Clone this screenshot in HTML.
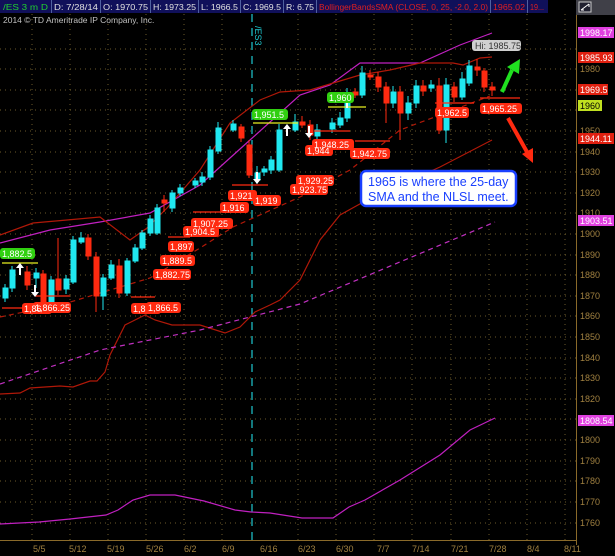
<!DOCTYPE html>
<html><head><meta charset="utf-8"><style>
html,body{margin:0;padding:0;background:#000;width:615px;height:556px;overflow:hidden}
svg{display:block;font-family:"Liberation Sans",sans-serif}
</style></head><body>
<svg width="615" height="556" viewBox="0 0 615 556">
<rect width="615" height="556" fill="#000"/>
<g stroke="#6b5a2a" stroke-width="1" stroke-dasharray="1,4">
<path d="M32 14V540M70 14V540M108 14V540M146 14V540M184 14V540M222 14V540M298 14V540M336 14V540M374 14V540M412 14V540M451 14V540M489 14V540M527 14V540M565 14V540"/>
<path d="M0 49H576M0 69H576M0 90H576M0 110H576M0 131H576M0 152H576M0 172H576M0 193H576M0 213H576M0 234H576M0 255H576M0 275H576M0 296H576M0 316H576M0 337H576M0 358H576M0 378H576M0 399H576M0 419H576M0 440H576M0 461H576M0 481H576M0 502H576M0 523H576"/>
</g>
<line x1="252" y1="14" x2="252" y2="540" stroke="#1ec8d0" stroke-width="1.2" stroke-dasharray="8,6"/>
<text x="0" y="0" fill="#1ec8d0" font-size="9" transform="translate(255,26) rotate(90)">/ES3</text>
<line x1="576.5" y1="14" x2="576.5" y2="545" stroke="#8a6a2a"/>
<line x1="0" y1="540.5" x2="576" y2="540.5" stroke="#8a6a2a"/>
<g fill="#a08040" font-size="9">
<text x="580" y="72">1980</text><text x="580" y="134">1950</text><text x="580" y="155">1940</text><text x="580" y="175">1930</text><text x="580" y="196">1920</text><text x="580" y="216">1910</text><text x="580" y="237">1900</text><text x="580" y="258">1890</text><text x="580" y="278">1880</text><text x="580" y="299">1870</text><text x="580" y="319">1860</text><text x="580" y="340">1850</text><text x="580" y="361">1840</text><text x="580" y="381">1830</text><text x="580" y="402">1820</text><text x="580" y="443">1800</text><text x="580" y="464">1790</text><text x="580" y="484">1780</text><text x="580" y="505">1770</text><text x="580" y="526">1760</text>
</g>
<g fill="#a08040" font-size="9">
<text x="33" y="552">5/5</text><text x="69" y="552">5/12</text><text x="107" y="552">5/19</text><text x="146" y="552">5/26</text><text x="184" y="552">6/2</text><text x="222" y="552">6/9</text><text x="260" y="552">6/16</text><text x="298" y="552">6/23</text><text x="336" y="552">6/30</text><text x="377" y="552">7/7</text><text x="412" y="552">7/14</text><text x="451" y="552">7/21</text><text x="489" y="552">7/28</text><text x="527" y="552">8/4</text><text x="564" y="552">8/11</text>
</g>
<g font-size="9">
<rect x="578" y="27" width="36" height="11" fill="#e040e0"/><text x="580" y="36" fill="#fff">1998.17</text>
<rect x="578" y="52" width="36" height="11" fill="#e02010"/><text x="580" y="61" fill="#fff">1985.93</text>
<rect x="578" y="84" width="30" height="11" fill="#e02010"/><text x="580" y="93" fill="#fff">1969.5</text>
<rect x="578" y="100" width="24" height="11" fill="#c0e020"/><text x="580" y="109" fill="#000">1960</text>
<rect x="578" y="133" width="36" height="11" fill="#e02010"/><text x="580" y="142" fill="#fff">1944.11</text>
<rect x="578" y="215" width="36" height="11" fill="#e040e0"/><text x="580" y="224" fill="#fff">1903.51</text>
<rect x="578" y="415" width="36" height="11" fill="#e040e0"/><text x="580" y="424" fill="#fff">1808.54</text>
</g>
<g fill="none" stroke-width="1.2">
<polyline stroke="#c020c0" points="0,243 50,230 100,222 150,213 200,185 250,140 300,95 330,85 360,63 420,63 460,45 492,33"/>
<polyline stroke="#b01808" points="0,235 33,223 67,220 100,217 130,240 147,228 167,208 200,170 230,123 260,100 280,92 310,90 360,75 390,70 420,63 453,63 463,65 480,58 492,57"/>
<polyline stroke="#b01808" points="0,394 20,393 30,388 60,386 73,387 90,381 97,381 105,372 110,355 125,325 145,315 155,320 172,325 200,325 225,333 240,327 255,312 270,305 280,300 300,280 320,240 340,215 367,200 400,185 440,167 492,140"/>
<polyline stroke="#b01808" stroke-dasharray="5,4" points="0,317 67,303 150,278 200,248 233,227 300,197 350,170 400,130 440,115 490,96"/>
<polyline stroke="#c030c0" stroke-dasharray="5,4" points="0,384 100,350 200,330 300,304 495,222"/>
<polyline stroke="#c020c0" points="0,524 39,522 70,519 106,515 118,510 133,500 150,495 175,495 204,501 235,510 251,512 270,513 302,518 333,518 349,507 365,500 400,480 440,455 470,430 495,418"/>
</g>
<g stroke-width="1">
<g stroke="#20e8f0" fill="#20e8f0">
<line x1="5" y1="284" x2="5" y2="302"/><rect x="3" y="288" width="5" height="10"/>
<line x1="12" y1="266" x2="12" y2="292"/><rect x="10" y="270" width="5" height="18"/>
<line x1="36" y1="268" x2="36" y2="288"/><rect x="34" y="273" width="5" height="5"/>
<line x1="51" y1="276" x2="51" y2="312"/><rect x="49" y="280" width="5" height="23"/>
<line x1="66" y1="275" x2="66" y2="294"/><rect x="64" y="279" width="5" height="10"/>
<line x1="73" y1="236" x2="73" y2="284"/><rect x="71" y="240" width="5" height="42"/>
<line x1="81" y1="232" x2="81" y2="244"/><rect x="79" y="238" width="5" height="4"/>
<line x1="103" y1="274" x2="103" y2="310"/><rect x="101" y="278" width="5" height="18"/>
<line x1="111" y1="260" x2="111" y2="280"/><rect x="109" y="265" width="5" height="13"/>
<line x1="127" y1="258" x2="127" y2="296"/><rect x="125" y="261" width="5" height="32"/>
<line x1="135" y1="244" x2="135" y2="263"/><rect x="133" y="248" width="5" height="13"/>
<line x1="142" y1="230" x2="142" y2="250"/><rect x="140" y="233" width="5" height="15"/>
<line x1="150" y1="215" x2="150" y2="236"/><rect x="148" y="219" width="5" height="14"/>
<line x1="157" y1="204" x2="157" y2="235"/><rect x="155" y="208" width="5" height="25"/>
<line x1="172" y1="190" x2="172" y2="212"/><rect x="170" y="193" width="5" height="15"/>
<line x1="180" y1="184" x2="180" y2="196"/><rect x="178" y="188" width="5" height="5"/>
<line x1="195" y1="178" x2="195" y2="188"/><rect x="193" y="181" width="5" height="4"/>
<line x1="202" y1="172" x2="202" y2="186"/><rect x="200" y="177" width="5" height="5"/>
<line x1="210" y1="146" x2="210" y2="180"/><rect x="208" y="150" width="5" height="27"/>
<line x1="218" y1="122" x2="218" y2="154"/><rect x="216" y="128" width="5" height="23"/>
<line x1="233" y1="120" x2="233" y2="132"/><rect x="231" y="124" width="5" height="6"/>
<line x1="257" y1="166" x2="257" y2="184"/><rect x="255" y="173" width="5" height="7"/>
<line x1="264" y1="166" x2="264" y2="176"/><rect x="262" y="169" width="5" height="3"/>
<line x1="271" y1="156" x2="271" y2="174"/><rect x="269" y="160" width="5" height="10"/>
<line x1="279" y1="124" x2="279" y2="172"/><rect x="277" y="130" width="5" height="40"/>
<line x1="295" y1="114" x2="295" y2="132"/><rect x="293" y="122" width="5" height="8"/>
<line x1="317" y1="124" x2="317" y2="140"/><rect x="315" y="130" width="5" height="6"/>
<line x1="332" y1="118" x2="332" y2="133"/><rect x="330" y="123" width="5" height="6"/>
<line x1="340" y1="112" x2="340" y2="128"/><rect x="338" y="118" width="5" height="7"/>
<line x1="347" y1="88" x2="347" y2="122"/><rect x="345" y="96" width="5" height="22"/>
<line x1="362" y1="66" x2="362" y2="98"/><rect x="360" y="73" width="5" height="22"/>
<line x1="393" y1="86" x2="393" y2="108"/><rect x="391" y="92" width="5" height="11"/>
<line x1="408" y1="96" x2="408" y2="120"/><rect x="406" y="103" width="5" height="10"/>
<line x1="416" y1="80" x2="416" y2="108"/><rect x="414" y="86" width="5" height="17"/>
<line x1="431" y1="80" x2="431" y2="92"/><rect x="429" y="85" width="5" height="3"/>
<line x1="446" y1="78" x2="446" y2="143"/><rect x="444" y="85" width="5" height="45"/>
<line x1="462" y1="72" x2="462" y2="100"/><rect x="460" y="79" width="5" height="18"/>
<line x1="469" y1="60" x2="469" y2="86"/><rect x="467" y="66" width="5" height="17"/>
</g>
<g stroke="#ff2a10" fill="#ff2a10">
<line x1="27" y1="266" x2="27" y2="290"/><rect x="25" y="272" width="5" height="13"/>
<line x1="43" y1="270" x2="43" y2="306"/><rect x="41" y="274" width="5" height="29"/>
<line x1="58" y1="238" x2="58" y2="295"/><rect x="56" y="279" width="5" height="11"/>
<line x1="88" y1="234" x2="88" y2="260"/><rect x="86" y="238" width="5" height="18"/>
<line x1="96" y1="252" x2="96" y2="312"/><rect x="94" y="257" width="5" height="39"/>
<line x1="119" y1="259" x2="119" y2="298"/><rect x="117" y="266" width="5" height="27"/>
<line x1="164" y1="195" x2="164" y2="212"/><rect x="162" y="200" width="5" height="3"/>
<line x1="241" y1="124" x2="241" y2="142"/><rect x="239" y="127" width="5" height="11"/>
<line x1="249" y1="140" x2="249" y2="178"/><rect x="247" y="145" width="5" height="30"/>
<line x1="302" y1="116" x2="302" y2="128"/><rect x="300" y="122" width="5" height="3"/>
<line x1="310" y1="120" x2="310" y2="140"/><rect x="308" y="125" width="5" height="10"/>
<line x1="355" y1="88" x2="355" y2="98"/><rect x="353" y="92" width="5" height="3"/>
<line x1="370" y1="70" x2="370" y2="80"/><rect x="368" y="75" width="5" height="2"/>
<line x1="378" y1="72" x2="378" y2="92"/><rect x="376" y="77" width="5" height="10"/>
<line x1="386" y1="82" x2="386" y2="123"/><rect x="384" y="87" width="5" height="16"/>
<line x1="400" y1="86" x2="400" y2="140"/><rect x="398" y="92" width="5" height="21"/>
<line x1="423" y1="80" x2="423" y2="96"/><rect x="421" y="86" width="5" height="5"/>
<line x1="439" y1="78" x2="439" y2="134"/><rect x="437" y="86" width="5" height="44"/>
<line x1="454" y1="82" x2="454" y2="102"/><rect x="452" y="87" width="5" height="10"/>
<line x1="477" y1="59" x2="477" y2="76"/><rect x="475" y="67" width="5" height="3"/>
<line x1="484" y1="68" x2="484" y2="92"/><rect x="482" y="71" width="5" height="16"/>
<line x1="492" y1="82" x2="492" y2="96"/><rect x="490" y="87" width="5" height="3"/>
</g>
</g>
<g stroke="#ff2a10" stroke-width="1.2">
<line x1="2" y1="308" x2="40" y2="308"/><line x1="35" y1="296" x2="70" y2="296"/>
<line x1="131" y1="297" x2="155" y2="297"/><line x1="168" y1="237" x2="190" y2="237"/>
<line x1="193" y1="212" x2="222" y2="212"/><line x1="232" y1="185" x2="268" y2="185"/>
<line x1="314" y1="131" x2="350" y2="131"/><line x1="355" y1="141" x2="390" y2="141"/>
<line x1="435" y1="103" x2="474" y2="103"/><line x1="480" y1="98" x2="520" y2="98"/>
</g>
<g stroke="#e8f020" stroke-width="1.3">
<line x1="2" y1="263" x2="38" y2="263"/><line x1="328" y1="107" x2="366" y2="107"/><line x1="253" y1="123" x2="298" y2="123"/>
</g>
<g fill="#fff">
<path d="M20 263l-4 5h3v7h2v-7h3z"/><path d="M35 297l-4-5h3v-7h2v7h3z"/>
<path d="M347 96l-4 5h3v7h2v-7h3z"/><path d="M309 138l-4-5h3v-7h2v7h3z"/>
<path d="M287 124l-4 5h3v7h2v-7h3z"/><path d="M257 184l-4-5h3v-7h2v7h3z"/>
</g>
<g font-size="9" fill="#fff">
<g fill="#ff2a10">
<rect x="22" y="303" width="30" height="11" rx="3"/><rect x="33" y="302" width="38" height="11" rx="3"/>
<rect x="131" y="303" width="30" height="11" rx="3"/><rect x="146" y="302" width="35" height="11" rx="3"/>
<rect x="153" y="269" width="38" height="11" rx="3"/><rect x="160" y="255" width="35" height="11" rx="3"/>
<rect x="168" y="241" width="26" height="11" rx="3"/><rect x="183" y="226" width="36" height="11" rx="3"/>
<rect x="191" y="218" width="42" height="11" rx="3"/><rect x="220" y="202" width="29" height="11" rx="3"/>
<rect x="228" y="190" width="29" height="11" rx="3"/><rect x="253" y="195" width="28" height="11" rx="3"/>
<rect x="290" y="184" width="38" height="11" rx="3"/><rect x="296" y="175" width="38" height="11" rx="3"/>
<rect x="305" y="145" width="28" height="11" rx="3"/><rect x="312" y="139" width="42" height="11" rx="3"/>
<rect x="350" y="148" width="40" height="11" rx="3"/><rect x="435" y="107" width="34" height="11" rx="3"/>
<rect x="480" y="103" width="42" height="11" rx="3"/>
</g>
<text x="24" y="312">1,86</text><text x="35" y="311">1,866.25</text>
<text x="133" y="312">1,8</text><text x="148" y="311">1,866.5</text>
<text x="155" y="278">1,882.75</text><text x="162" y="264">1,889.5</text>
<text x="170" y="250">1,897</text><text x="185" y="235">1,904.5</text>
<text x="193" y="227">1,907.25</text><text x="222" y="211">1,916</text>
<text x="230" y="199">1,921</text><text x="255" y="204">1,919</text>
<text x="292" y="193">1,923.75</text><text x="298" y="184">1,929.25</text>
<text x="307" y="154">1,944</text><text x="314" y="148">1,948.25</text>
<text x="352" y="157">1,942.75</text><text x="437" y="116">1,962.5</text>
<text x="482" y="112">1,965.25</text>
<rect x="0" y="248" width="35" height="11" rx="3" fill="#30d010"/><text x="2" y="257">1,882.5</text>
<rect x="327" y="92" width="27" height="11" rx="3" fill="#30d010"/><text x="329" y="101">1,960</text>
<rect x="252" y="109" width="36" height="11" rx="3" fill="#30d010"/><text x="254" y="118">1,951.5</text>
<rect x="472" y="40" width="49" height="11" rx="3" fill="#d0d0d0"/><text x="475" y="49" fill="#333">Hi: 1985.75</text>
</g>
<rect x="361" y="171" width="155" height="35" rx="5" fill="#fff" stroke="#1a40ff" stroke-width="2.5"/>
<text x="368" y="186" fill="#1a40ff" font-size="12.5">1965 is where the 25-day</text>
<text x="368" y="201" fill="#1a40ff" font-size="12.5">SMA and the NLSL meet.</text>
<path d="M502 92L512 70" stroke="#20e020" stroke-width="4" fill="none"/><path d="M507 67l13-8-1 15z" fill="#20e020"/>
<path d="M508 118L527 152" stroke="#ff2a10" stroke-width="4" fill="none"/><path d="M522 154l11 9 0-15z" fill="#ff2a10"/>
<rect x="0" y="0" width="548" height="13" fill="#10105a"/>
<g stroke="#5060a0"><path d="M51.5 0V13M100.5 0V13M150.5 0V13M198.5 0V13M240.5 0V13M283.5 0V13M316.5 0V13M490.5 0V13M527.5 0V13"/></g>
<g font-size="8.5" fill="#e0e0e0">
<text x="3" y="10" fill="#20d030" textLength="45" lengthAdjust="spacingAndGlyphs">/ES 3 m D</text>
<text x="54" y="10" textLength="44" lengthAdjust="spacingAndGlyphs">D: 7/28/14</text>
<text x="103" y="10" textLength="45" lengthAdjust="spacingAndGlyphs">O: 1970.75</text>
<text x="153" y="10" textLength="43" lengthAdjust="spacingAndGlyphs">H: 1973.25</text>
<text x="201" y="10" textLength="37" lengthAdjust="spacingAndGlyphs">L: 1966.5</text>
<text x="243" y="10" textLength="38" lengthAdjust="spacingAndGlyphs">C: 1969.5</text>
<text x="286" y="10" textLength="28" lengthAdjust="spacingAndGlyphs">R: 6.75</text>
<text x="319" y="10" fill="#e02020" textLength="169" lengthAdjust="spacingAndGlyphs">BollingerBandsSMA (CLOSE, 0, 25, -2.0, 2.0)</text>
<text x="493" y="10" fill="#e02020" textLength="32" lengthAdjust="spacingAndGlyphs">1965.02</text>
<text x="530" y="10" fill="#e02020" textLength="14" lengthAdjust="spacingAndGlyphs">19...</text>
</g>
<rect x="576" y="0" width="39" height="15" fill="#404048"/>
<rect x="579" y="2" width="12" height="10" fill="#202030" stroke="#ccc"/><path d="M581 10l8-6M581 10h3M589 4v3" stroke="#fff"/>
<text x="3" y="23" fill="#c0c0c0" font-size="8.5">2014 © TD Ameritrade IP Company, Inc.</text>
</svg>
</body></html>
